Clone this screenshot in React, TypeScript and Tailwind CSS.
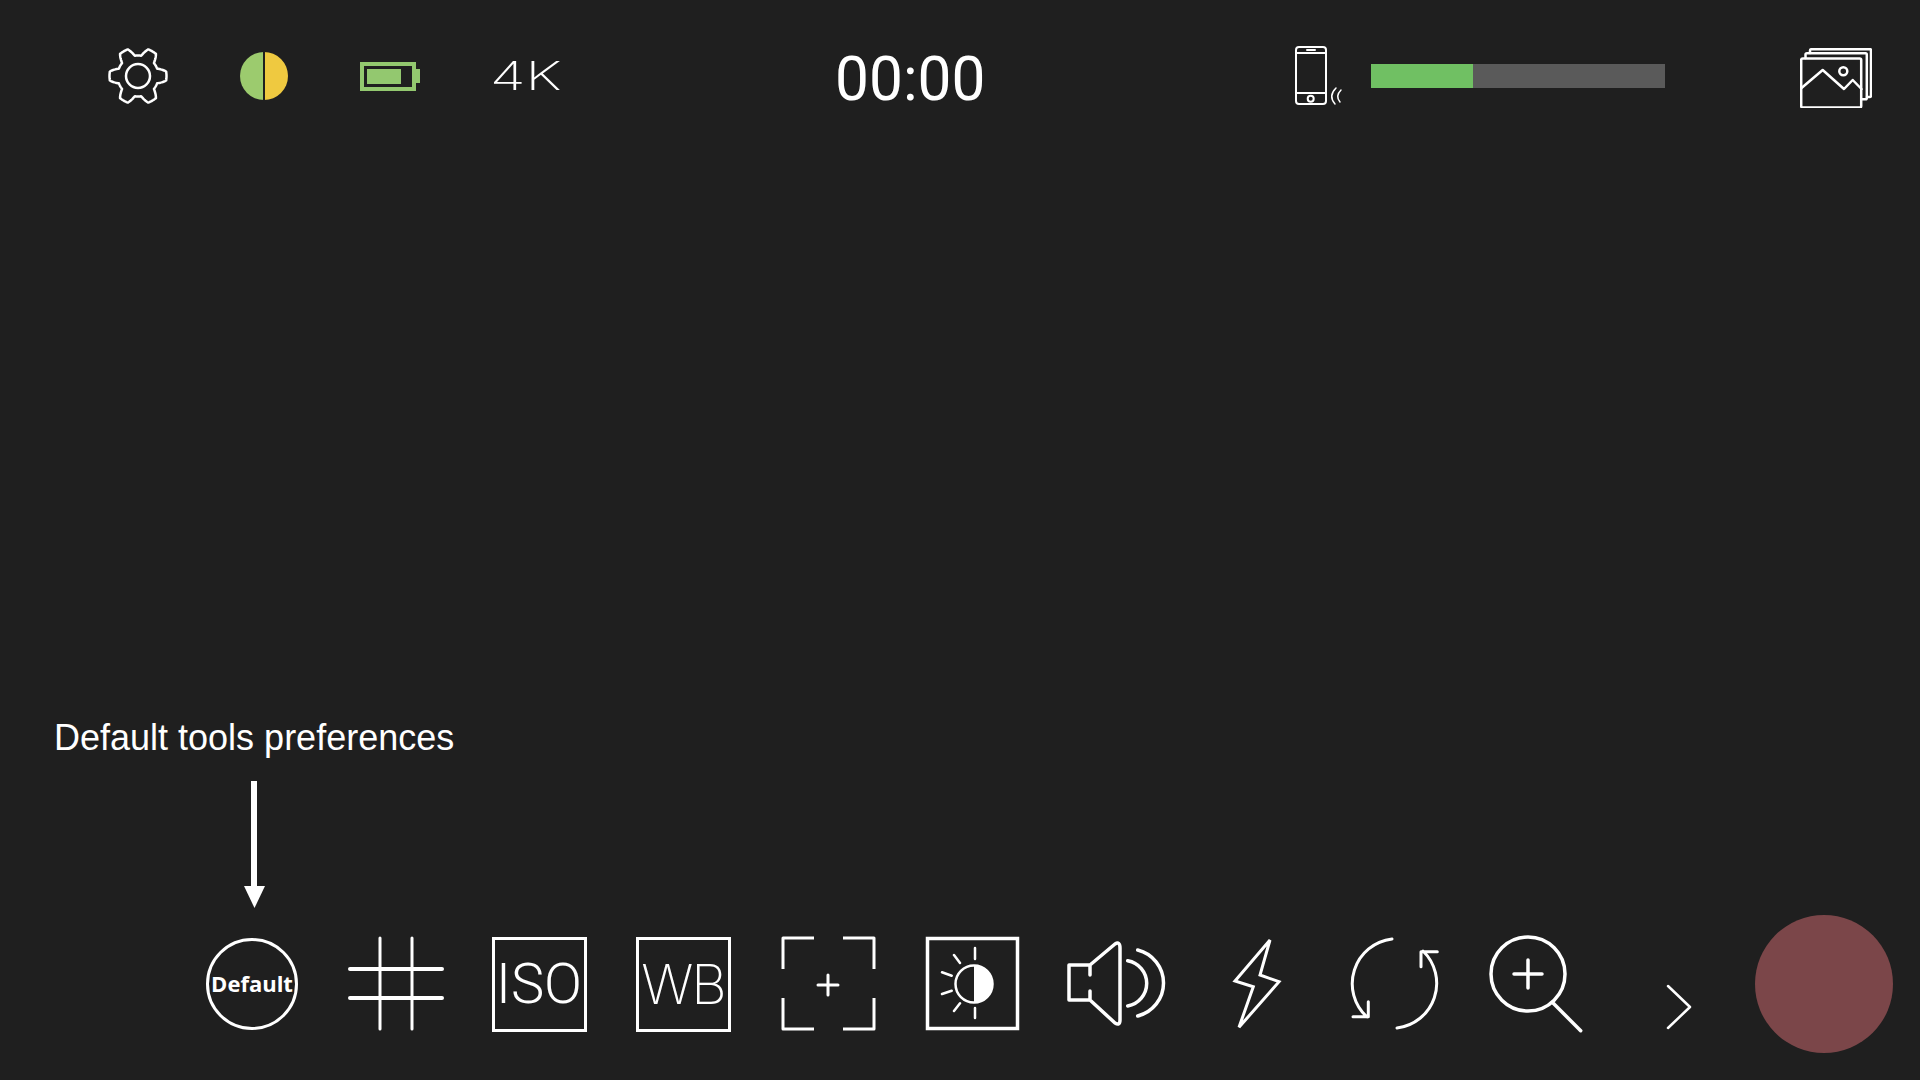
import React from 'react';

// Wavy outline for the 6 tooth settings cog, sampled in polar coords
const gearPath = (() => {
  const pts: string[] = [];
  for (let i = 0; i < 240; i++) {
    const t = (i / 240) * Math.PI * 2;
    const w = Math.cos(6 * t);
    const s = Math.max(-1, Math.min(1, w * 1.7));
    const r = 24.5 + 4 * s;
    pts.push(`${(30 + r * Math.cos(t)).toFixed(2)},${(28 + r * Math.sin(t)).toFixed(2)}`);
  }
  return `M${pts.join('L')}Z`;
})();

const iconStroke = { fill: 'none', stroke: '#fff', strokeLinecap: 'round', strokeLinejoin: 'round' } as const;

const ToolSvg: React.FC<{ children: React.ReactNode; width?: number }> = ({ children, width = 144 }) => (
  <svg width={width} height={120} viewBox={`0 0 ${width} 120`} {...iconStroke} strokeWidth={3}>
    {children}
  </svg>
);

const BoxTool: React.FC<{ label: string; className: string }> = ({ label, className }) => (
  <div className="flex w-[144px] justify-center pr-[2px]">
    <div className="flex h-[95px] w-[95px] items-center justify-center border-[3px] border-white text-white">
      <span className={className}>{label}</span>
    </div>
  </div>
);

const App: React.FC = () => {
  return (
    <div className="flex h-screen w-full flex-col overflow-hidden bg-[#1f1f1f] font-['Roboto',sans-serif] text-white">
      {/* Top status bar */}
      <div className="flex h-[152px] items-center pl-[108px]">
        <svg width={60} height={56} viewBox="0 0 60 56" {...iconStroke} strokeWidth={2.5}>
          <path d={gearPath} />
          <circle cx={30} cy={28} r={12} />
        </svg>

        <div className="ml-[72px] flex h-[48px] w-[48px] overflow-hidden rounded-full">
          <div className="w-[23px] bg-[#9ccb6e]" />
          <div className="w-[2px] bg-[#1f1f1f]" />
          <div className="w-[23px] bg-[#efc940]" />
        </div>

        <div className="ml-[72px] flex items-center">
          <div className="flex h-[29px] w-[56px] items-center border-[4px] border-[#93c86f] pl-[3px]">
            <div className="h-[15px] w-[34px] bg-[#93c86f]" />
          </div>
          <div className="h-[14px] w-[4px] bg-[#93c86f]" />
        </div>

        <div className="ml-[70px] w-[67px] origin-left scale-x-[1.45] font-['Inter',sans-serif] text-[40px] leading-none font-extralight">4K</div>

        <div className="ml-[278px] mt-[6px] w-[146px] origin-left scale-x-[0.99] text-[61px] leading-none font-normal whitespace-nowrap">00:00</div>

        <svg className="ml-[314px] shrink-0" width={48} height={60} viewBox="0 0 48 60" {...iconStroke} strokeWidth={2}>
          <rect x={1} y={1} width={30} height={57} rx={3} />
          <path d="M1 7H31M1 47H31M12 4H20" />
          <circle cx={15.7} cy={52.7} r={3} />
          <path d="M41 42Q33 50 40 58M46 44Q40 50 45 56" strokeWidth={1.5} />
        </svg>

        <div className="ml-[28px] flex h-[24px] w-[294px] bg-[#5a5a5a]">
          <div className="h-full w-[102px] bg-[#70c063]" />
        </div>

        <svg className="ml-[135px] mt-[4px]" width={72} height={60} viewBox="0 0 72 60" {...iconStroke} strokeWidth={2.5}>
          <rect x={1.2} y={10.5} width={60} height={49} rx={1.5} />
          <path d="M5.5 10V6.5Q5.5 5.2 7 5.2H65.5Q66.8 5.2 66.8 6.5V50Q66.8 51.3 65.5 51.3H62" />
          <path d="M10 5V2.5Q10 1.2 11.5 1.2H70Q71 1.2 71 2.5V47.5Q71 49 69.5 49H67" />
          <path d="M1.5 40L22.7 22L44 41L52.7 32L61.5 41" />
          <circle cx={43.3} cy={23.3} r={4} />
        </svg>
      </div>

      {/* Hint label above the first tool */}
      <div className="mt-auto pl-[54px] font-['Liberation_Sans',sans-serif] text-[36px] leading-[40px] font-normal">Default tools preferences</div>
      <div className="mt-[23px] mb-[7px] pl-[244px]">
        <svg className="block" width={21} height={127} viewBox="0 0 21 127">
          <rect x={7} y={0} width={6} height={107} fill="#fff" />
          <path d="M0 105H21L10.5 127Z" fill="#fff" />
        </svg>
      </div>

      {/* Bottom tools */}
      <div className="flex h-[138px] items-center pl-[180px] mb-[27px]">
        <div className="flex w-[144px] justify-center">
          <div className="flex h-[92px] w-[92px] items-center justify-center rounded-full border-[3px] border-white">
            <span className="mb-[2px] font-['Open_Sans',sans-serif] text-[22px] leading-none font-bold">Default</span>
          </div>
        </div>

        <ToolSvg>
          <path d="M56 14V105M88 14V105" />
          <path d="M26 45H118M26 74H118" strokeWidth={4} />
        </ToolSvg>

        <BoxTool label="ISO" className="text-[56px] leading-none font-light font-['Roboto',sans-serif]" />
        <BoxTool label="WB" className="text-[55px] leading-none font-extralight font-['Inter',sans-serif] tracking-[-2px]" />

        <ToolSvg>
          <path strokeLinecap="butt" d="M27 45V14H58M87 14H118V45M27 74V105H58M87 105H118V74" />
          <path d="M62 61H82M72 51V71" />
        </ToolSvg>

        <ToolSvg>
          <rect x={27.5} y={14.5} width={90} height={90} strokeWidth={3.5} strokeLinejoin="miter" />
          <circle cx={74} cy={60} r={18.5} strokeWidth={2.5} />
          <path d="M74 41.5A18.5 18.5 0 0 1 74 78.5Z" fill="#fff" stroke="none" />
          <path strokeWidth={2.5} d="M75 24V35M75 84V94M54 31L60 39M42 48.3L51.7 51.7M42 70L51.7 66.7M54 87L60 79.3" />
        </ToolSvg>

        <ToolSvg>
          <path strokeWidth={3.5} d="M46 51V41H25V76H46V67M46 41L71 20Q76 17 76 24V96Q76 102 71 99L46 76" />
          <path strokeWidth={3.5} d="M83.7 36.7A23 23 0 0 1 83.7 82M93.7 26A34 34 0 0 1 93.7 92" />
        </ToolSvg>

        <ToolSvg>
          <path strokeLinejoin="miter" d="M82 16L47 57L65.3 62.7L51 103.3L91 57.7L72 51Z" />
        </ToolSvg>

        <ToolSvg>
          <path d="M60 15A45 45 0 0 0 35 93M21 92.7H36.3V77.7" />
          <path d="M91 27A45 45 0 0 1 65 104M89 42.7V27.7H105.3" />
        </ToolSvg>

        <ToolSvg>
          <circle cx={52} cy={50} r={37} strokeWidth={3.5} />
          <path d="M38 50H66M52 36V64" strokeWidth={3.5} />
          <path d="M77.3 79.3L104.7 106.7" strokeWidth={3.5} />
        </ToolSvg>

        <ToolSvg width={135}>
          <path strokeWidth={2.5} d="M48 62L70 83L48 104" />
        </ToolSvg>

        <div className="h-[138px] w-[138px] rounded-full bg-[#7b4649]" />
      </div>
    </div>
  );
};

export default App;
